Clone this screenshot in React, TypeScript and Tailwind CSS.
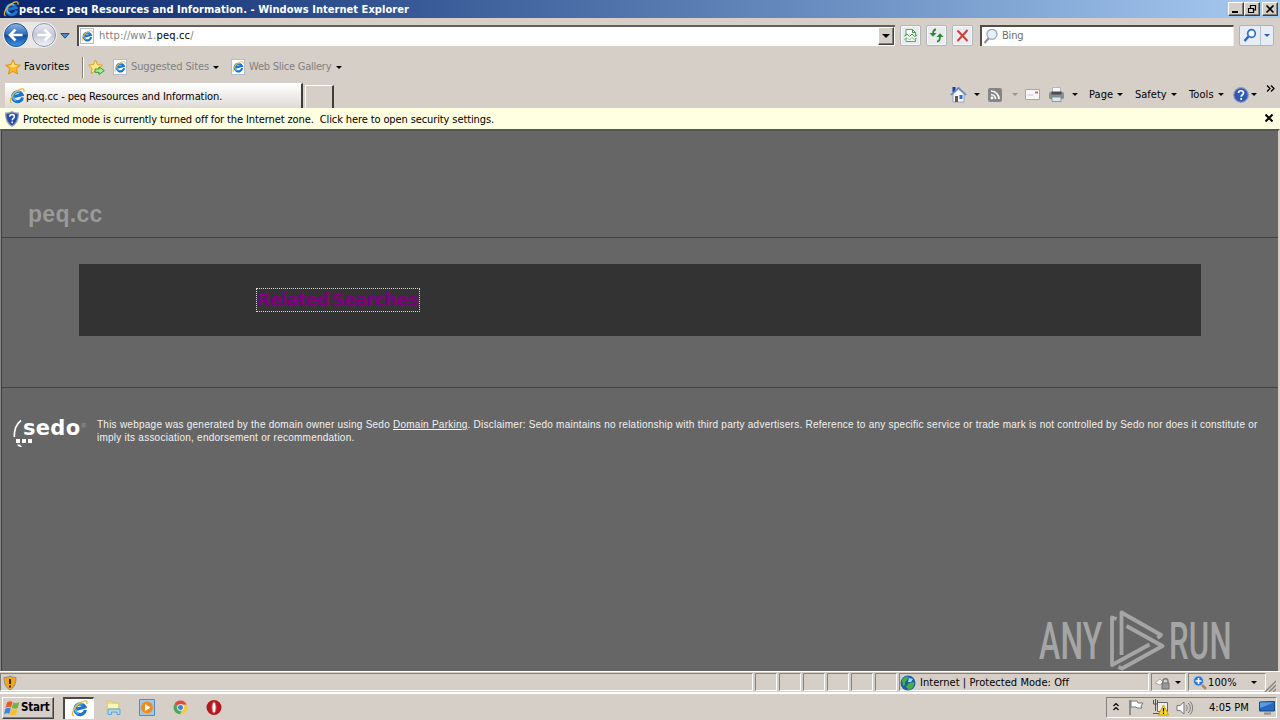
import type { ReactNode } from 'react';

function IeIcon({ size = 15 }: { size?: number }) {
  return (
    <svg width={size} height={size} viewBox="0 0 16 16" fill="none" className="shrink-0">
      <g transform="rotate(-14 8 8)">
        <path d="M13 10.800A5 5 0 1 1 13.300 7.900H5.200" stroke="#1d74cc" strokeWidth="3" />
        <path d="M12 4.600A5.200 5.200 0 0 0 3.600 8c0 2 1 3.500 2.500 4.300" stroke="#5bbcf4" strokeWidth="1.500" />
      </g>
      <path d="M2.600 14.800C-.6 14.200 2.800 5.600 9.200 2.200 13 .1 16 .3 14.800 3.700" stroke="#edb72a" strokeWidth="1.200" />
    </svg>
  );
}

function PageIcon() {
  return (
    <div className="flex h-[16px] w-[14px] shrink-0 items-center border border-[#b4bdc9] bg-white">
      <IeIcon size={12} />
    </div>
  );
}

function Arrow({ color = 'text-black' }: { color?: string }) {
  return (
    <svg width="6" height="3" viewBox="0 0 6 3" className={`shrink-0 ${color}`}>
      <path d="M0 0h6L3 3z" fill="currentColor" />
    </svg>
  );
}

function Star() {
  return (
    <svg width="16" height="16" viewBox="0 0 16 16" className="shrink-0">
      <path d="M8 .8l2.200 4.800 5.200.6-3.900 3.500 1.100 5.300L8 12.400 3.400 15l1.100-5.300L.6 6.200l5.200-.6z" fill="#fbb829" stroke="#d9870f" strokeWidth=".8" />
      <path d="M8 2.500l1.500 3.800 3.500.4-5 1.800-4.500-1.800 3-.4z" fill="#ffe27c" />
    </svg>
  );
}

function AddStar() {
  return (
    <svg width="17" height="17" viewBox="0 0 17 17" className="-ml-px shrink-0">
      <path d="M7.500 1l2 4.600 5 .5-3.800 3.400 1 5-4.200-2.500-4.500 2.500 1.200-5L.6 6.100l4.900-.5z" fill="#ffe88a" stroke="#e0a21b" />
      <path d="M7 10h4V7.800l5.300 3.800L11 15.500v-2.200H7z" fill="#a5ec94" stroke="#23942a" strokeWidth=".9" />
    </svg>
  );
}

function NavCircle({ forward = false }: { forward?: boolean }) {
  return (
    <svg width="26" height="26" viewBox="0 0 26 26" className="shrink-0">
      <defs>
        <linearGradient id="backFill" x1="0" y1="0" x2="0" y2="1">
          <stop offset="0" stopColor="#8db5e6" />
          <stop offset=".48" stopColor="#2c69b8" />
          <stop offset=".52" stopColor="#104a9e" />
          <stop offset="1" stopColor="#3d9ae8" />
        </linearGradient>
        <linearGradient id="forwardFill" x1="0" y1="0" x2="0" y2="1">
          <stop offset="0" stopColor="#e9ebf2" />
          <stop offset=".5" stopColor="#c3c8d6" />
          <stop offset="1" stopColor="#f3f5fa" />
        </linearGradient>
      </defs>
      <circle cx="13" cy="13" r="12.500" fill="#f4f4f7" />
      <circle cx="13" cy="13" r="11.500" fill={forward ? 'url(#forwardFill)' : 'url(#backFill)'} stroke={forward ? '#8f96a8' : '#294f8c'} />
      <path
        d={forward ? 'M6.500 13h12M13.500 7.500l5.500 5.500-5.500 5.500' : 'M19.500 13h-12M12.500 7.500L7 13l5.500 5.500'}
        stroke="#fff"
        strokeWidth="2.700"
        fill="none"
      />
    </svg>
  );
}

function CaptionButton({ children }: { children: ReactNode }) {
  return (
    <div className="h-[14px] w-4 border border-t-white border-l-white border-r-[#404040] border-b-[#404040] bg-[#d6cfc8] shadow-[inset_-1px_-1px_0_#86807a]">
      <svg width="14" height="12" viewBox="0 0 14 12" fill="none" stroke="#000">
        {children}
      </svg>
    </div>
  );
}

function TitleBar() {
  return (
    <header className="flex h-[18px] items-center bg-linear-to-r from-[#0b256b] to-[#a7cbf1] pr-0.5 pl-[3px]">
      <IeIcon size={16} />
      <span className="w-[500px] text-[11px] leading-[17px] font-bold tracking-[0.045px] text-white">
        peq.cc - peq Resources and Information. - Windows Internet Explorer
      </span>
      <div className="ml-auto flex">
        <CaptionButton>
          <path d="M3 9h6" strokeWidth="2" />
        </CaptionButton>
        <CaptionButton>
          <path d="M5.500 5V2.500h5v4.500H9M5 2.500h6M3.500 5.500h5v4h-5zM3 5.500h6" strokeWidth="1.200" />
        </CaptionButton>
        <div className="w-0.5" />
        <CaptionButton>
          <path d="M3.500 2.500l7 7M10.500 2.500l-7 7" strokeWidth="1.700" />
        </CaptionButton>
      </div>
    </header>
  );
}

function ToolButton({ children }: { children: ReactNode }) {
  return (
    <div className="mr-[5px] flex h-[21px] w-[21px] items-center justify-center rounded-[2px] border border-[#b2b5ba] bg-[#e9ebef] shadow-[inset_0_0_0_1px_#f8f9fb]">
      <svg width="17" height="17" viewBox="0 0 17 17" fill="none">
        {children}
      </svg>
    </div>
  );
}

function AddressBar() {
  return (
    <div className="flex h-[34px] items-center pl-[3px]">
      <div className="flex gap-0.5 rounded-full bg-[#e8e6e7]">
        <NavCircle />
        <NavCircle forward />
      </div>
      <svg width="10" height="6" viewBox="0 0 10 6" className="mt-0.5 ml-[3px] shrink-0">
        <path d="M.8.5h8.400L5 5.200z" fill="#4a8bc8" stroke="#24507f" />
      </svg>
      <div className="ml-[7px] flex h-[21px] w-[818px] items-center border-t-2 border-l-2 border-[#504d4a] border-t-[#625f5c] bg-white">
        <div className="ml-px">
          <PageIcon />
        </div>
        <span className="ml-[5px] text-[11px] leading-[18px] tracking-[0.15px] text-[#808080]">
          http://ww1.<span className="text-black">peq.cc</span>/
        </span>
        <div className="mr-px ml-auto flex h-[18px] w-4 items-center justify-center border border-t-white border-l-white border-r-[#404040] border-b-[#404040] bg-[#d6cfc8] shadow-[inset_-1px_-1px_0_#86807a]">
          <svg width="8" height="4" viewBox="0 0 8 4">
            <path d="M0 0h8L4 4z" fill="#000" />
          </svg>
        </div>
      </div>
      <div className="ml-[5px] flex">
        <ToolButton>
          <path d="M4 2.500h6.500l3 3v9H4z" fill="#f4fbf4" stroke="#58a55d" />
          <path d="M10.500 2.500v3h3" stroke="#45964a" />
          <path d="M2 9.500l3-2.500 2.500 2.500L10 7l2.500 2.500L15 8" stroke="#45964a" />
          <path d="M2 11l3-2 2.500 2.500L10 9l2.500 2 2.500-1.500" stroke="#fff" strokeWidth="1.300" />
          <path d="M2 12.500l3-2 2.500 2.500 2.500-2.500 2.500 2.500 2.500-2" stroke="#7fc283" />
        </ToolButton>
        <ToolButton>
          <path d="M8 2.500C6 2.500 5 4 5 7.500M9 14.500c2 0 3-1.500 3-5" stroke="#2c8a33" strokeWidth="1.800" />
          <path d="M1.500 6h7L5 9.700zM8.500 10h7L12 6.300z" fill="#2c8a33" />
        </ToolButton>
        <ToolButton>
          <path d="M3.500 3.500l10 10.500M13.500 3L3.500 14" stroke="#c9403f" strokeWidth="2" />
        </ToolButton>
      </div>
      <div className="ml-0.5 flex h-[21px] w-[254px] items-center border-t-2 border-r border-l-2 border-[#504d4a] border-r-[#efebe6] bg-white pl-px">
        <svg width="17" height="17" viewBox="0 0 17 17" fill="none">
          <path d="M6 10L1.500 15" stroke="#8b8e94" strokeWidth="2" />
          <circle cx="9" cy="6.300" r="5" fill="#e4eff8" stroke="#93a3b5" strokeWidth="1.200" />
        </svg>
        <span className="mt-px ml-0.5 text-[11px] tracking-[-0.2px] text-[#6d6d6d]">Bing</span>
      </div>
      <div className="ml-[5px] flex h-[21px] w-[35px] items-center rounded-[2px] border border-[#a9b3c4] bg-[#e6edf7]">
        <svg width="20" height="17" viewBox="0 0 20 17" fill="none">
          <path d="M8.500 9.500L4.500 14" stroke="#2a62c0" strokeWidth="2.400" />
          <circle cx="11.500" cy="6.500" r="3.800" fill="#fff" stroke="#2f6bd0" strokeWidth="1.700" />
        </svg>
        <div className="mr-[3px] h-full border-l border-[#b5c0d0]" />
        <Arrow color="text-[#2a62b8]" />
      </div>
    </div>
  );
}

function FavoritesBar() {
  return (
    <div className="flex h-[30px] items-center pl-[5px] text-[11px] text-[#808080]">
      <Star />
      <span className="ml-[3px] w-[58px] tracking-[0.1px] text-black">Favorites</span>
      <div className="mr-[5px] h-[21px] w-0.5 border-l border-[#868079] bg-white" />
      <AddStar />
      <div className="ml-2 flex w-[118px] items-center">
        <PageIcon />
        <span className="ml-1 w-[82px] pt-px tracking-[-0.13px]">Suggested Sites</span>
        <Arrow />
      </div>
      <div className="flex items-center">
        <PageIcon />
        <span className="ml-1 w-[87px] pt-px tracking-[-0.24px]">Web Slice Gallery</span>
        <Arrow />
      </div>
    </div>
  );
}

function HomeIcon() {
  return (
    <svg width="17" height="17" viewBox="0 0 17 17" className="shrink-0">
      <path d="M3 8v8h11V8L8.500 3z" fill="#f5f8fd" stroke="#8aa3cf" />
      <path d="M2.500 1h3v5h-3z" fill="#20389a" />
      <path d="M.8 9L8.500 1.800 16.200 9" fill="none" stroke="#6487c8" strokeWidth="1.600" />
      <path d="M5 10h3v6H5z" fill="#7a522c" />
      <path d="M9.500 9h3v4h-3z" fill="#2f6cbd" />
    </svg>
  );
}

function PrinterIcon() {
  return (
    <svg width="17" height="17" viewBox="0 0 17 17" className="shrink-0">
      <path d="M4.500 1.500h8V7h-8z" fill="#f7f7f7" stroke="#b5b5b5" />
      <rect x="1" y="6" width="15" height="7" rx="1.500" fill="#8c8e92" />
      <path d="M3.500 5.500h10v3h-10z" fill="#4b4d51" />
      <path d="M4 11h9v4.500H4z" fill="#d6e9ec" stroke="#7f8589" strokeWidth=".8" />
    </svg>
  );
}

function CommandBar() {
  return (
    <div className="flex h-[26px] pl-[5px] text-[11px]">
      <div className="mt-px flex h-[25px] w-[298px] items-center border-t border-r-2 border-white border-r-[#3f3c39] bg-linear-to-b from-white to-[#dedad6] pl-1">
        <IeIcon size={16} />
        <span className="ml-px pt-0.5 tracking-[-0.1px]">peq.cc - peq Resources and Information.</span>
      </div>
      <div className="mt-[3px] ml-0.5 h-[23px] w-[29px] border-t border-r-2 border-l border-white border-r-[#3f3c39]" />
      <div className="ml-auto flex h-[25px] w-[330px] items-center">
        <div className="flex w-[38px] items-center gap-[7px]">
          <HomeIcon />
          <Arrow />
        </div>
        <div className="flex w-[37px] items-center gap-[10px]">
          <svg width="14" height="14" viewBox="0 0 14 14" fill="none" stroke="#fff" strokeWidth="1.700">
            <rect width="14" height="14" rx="2" fill="#858585" stroke="none" />
            <path d="M3 6.500a4.500 4.500 0 0 1 4.500 4.500M3 3a8 8 0 0 1 8 8" />
            <circle cx="4" cy="10" r=".6" />
          </svg>
          <Arrow color="text-[#9b958f]" />
        </div>
        <svg width="15" height="11" viewBox="0 0 15 11" className="mr-[8px]">
          <path d="M.5.500h14v10H.5z" fill="#f8f6f7" stroke="#aaa5a5" />
          <path d="M10 2.500h3v2h-3z" fill="#d1686b" />
          <path d="M2.500 6h6" stroke="#c9c7d2" />
        </svg>
        <div className="flex w-[41px] items-center gap-[7px]">
          <PrinterIcon />
          <Arrow />
        </div>
        <div className="flex w-[46px] items-center">
          <span className="w-7 pt-px tracking-[0.1px]">Page</span>
          <Arrow />
        </div>
        <div className="flex w-[54px] items-center">
          <span className="w-9 pt-px">Safety</span>
          <Arrow />
        </div>
        <div className="flex w-[44px] items-center">
          <span className="w-[29px] pt-px tracking-[0.1px]">Tools</span>
          <Arrow />
        </div>
        <div className="flex w-[33px] items-center gap-0.5">
          <svg width="16" height="16" viewBox="0 0 16 16">
            <circle cx="8" cy="8" r="7.300" fill="#3158b5" stroke="#8d9cc0" strokeWidth="1.200" />
            <path d="M5.500 6c0-3 5-3 5 0 0 1.700-2.300 1.800-2.300 3.700M8.200 11v2" fill="none" stroke="#fff" strokeWidth="1.700" />
          </svg>
          <Arrow />
        </div>
        <svg width="9" height="7" viewBox="0 0 9 7" fill="none" stroke="#000" strokeWidth="1.300" className="mb-[13px]">
          <path d="M1 .5l3 3-3 3M5 .5l3 3-3 3" />
        </svg>
      </div>
    </div>
  );
}

function InfoBar() {
  return (
    <div className="flex h-[21px] items-center bg-[#ffffe1] pr-[7px] pl-[5px] text-[11px]">
      <svg width="14" height="16" viewBox="0 0 14 16">
        <path d="M7 .7c2 1.300 4 1.500 6.300 1.500C13.500 8 12 12.500 7 15.300 2 12.500.5 8 .7 2.200 3 2.200 5 2 7 .7z" fill="#2950a8" stroke="#96a1b8" strokeWidth="1.300" />
        <path d="M4.700 5.800c0-3 4.700-3 4.700 0 0 1.500-2.200 1.700-2.200 3.400M7.200 10.500v1.700" fill="none" stroke="#fff" strokeWidth="1.500" />
      </svg>
      <span className="ml-1 pt-[3px] tracking-[-0.11px] whitespace-pre">
        Protected mode is currently turned off for the Internet zone.  Click here to open security settings.
      </span>
      <svg width="8" height="8" viewBox="0 0 8 8" className="mb-px ml-auto">
        <path d="M.5.5l7 7M7.500.5l-7 7" stroke="#000" strokeWidth="2" />
      </svg>
    </div>
  );
}

function SedoLogo() {
  return (
    <div className="flex h-8 w-[84px] shrink-0">
      <svg width="9" height="32" viewBox="0 0 9 32" fill="none" className="overflow-visible">
        <path d="M8 3.500C3.500 7 1 12 1.300 20" stroke="#fff" strokeWidth="1.600" />
        <path d="M3 22h4v4H3zM9 22h4v4H9zM15 22h4v4h-4zM4 27.500h3l2 2.500c-2.500 0-4-.5-5-2.500z" fill="#fff" />
      </svg>
      <span className="ml-px font-['DejaVu_Sans',sans-serif] text-[21px] leading-[22px] font-bold tracking-[0.3px] text-white">sedo</span>
      <span className="mt-1 text-[7px] leading-[10px] text-[#999]">®</span>
    </div>
  );
}

function AnyRunWatermark() {
  return (
    <div className="absolute right-[45px] bottom-0 flex h-[62px] w-[194px] items-center text-[#a5a5a5]">
      <span className="mt-[3px] w-[70px] origin-left scale-x-[0.625] font-[Roboto,sans-serif] text-[51px] leading-[60px] font-medium tracking-[0.4px]">ANY</span>
      <svg width="56" height="62" viewBox="0 0 56 62" fill="none" stroke="currentColor" strokeWidth="3.800" strokeLinejoin="round" className="shrink-0">
        <path d="M7.500 10L3 8.500V56L40.500 35.500M12.500 46V3.500L52 26l-3.500 3M17.500 17L53.500 37 13 59.500 9.500 58" />
      </svg>
      <span className="mt-[3px] ml-[4px] w-[64px] origin-left scale-x-[0.61] font-[Roboto,sans-serif] text-[51px] leading-[60px] font-medium tracking-[0.4px]">RUN</span>
    </div>
  );
}

function WebPage() {
  return (
    <main className="relative h-[542px] overflow-hidden border-t-2 border-r-2 border-l border-[#868686] border-t-[#555] border-r-[#d6cfc8] bg-[#666] pl-px shadow-[inset_1px_0_0_#404040]">
      <div className="flex h-[107px] items-end border-b border-[#424242] pb-2 pl-[26px]">
        <h1 className="font-['Liberation_Sans',Arial,sans-serif] text-[23px] leading-[30px] font-bold tracking-[0.3px] text-[#999]">peq.cc</h1>
      </div>
      <div className="mx-[77px] mt-[26px] flex h-[72px] items-start bg-[#333] pt-6 pl-[177px]">
        <a className="flex h-6 w-[164px] items-center border border-dotted border-[#d9dfc9] font-['DejaVu_Sans',Verdana,sans-serif] text-[18px] leading-[22px] font-bold tracking-[-0.85px] [word-spacing:-2.5px] whitespace-nowrap text-[#800080] underline">
          Related Searches
        </a>
      </div>
      <footer className="mt-[51px] flex border-t border-[#424242] pt-[29px] pl-[11px]">
        <SedoLogo />
        <p className="mt-px font-['Liberation_Sans',Arial,sans-serif] text-[10px] leading-[13px] tracking-[0.244px] whitespace-nowrap text-[#f2f2f2]">
          This webpage was generated by the domain owner using Sedo <a className="underline">Domain Parking</a>. Disclaimer: Sedo maintains no
          relationship with third party advertisers. Reference to any specific service or trade mark is not controlled by Sedo nor does it constitute or
          <br />
          imply its association, endorsement or recommendation.
        </p>
      </footer>
      <AnyRunWatermark />
    </main>
  );
}

function StatusCell({ width, children }: { width: string; children?: ReactNode }) {
  return (
    <div className={`flex h-[18px] shrink-0 items-center border border-t-[#868079] border-l-[#868079] border-r-white border-b-white ${width}`}>
      {children}
    </div>
  );
}

function StatusBar() {
  return (
    <div className="flex h-[23px] items-center gap-0.5 border-t border-b-2 border-white text-[11px]">
      <StatusCell width="w-[753px]">
        <svg width="16" height="16" viewBox="0 0 16 16" className="mt-0.5 ml-px">
          <path d="M8 1c2 1 4 1.500 6 1.500 0 6-1.500 9.500-6 12.500C3.500 12 2 8.500 2 2.500 4 2.500 6 2 8 1z" fill="#f3a51c" stroke="#8e8c88" />
          <path d="M8 4v5M8 10.500v2" stroke="#3c2603" strokeWidth="2" />
        </svg>
      </StatusCell>
      <StatusCell width="w-[22px]" />
      <StatusCell width="w-[22px]" />
      <StatusCell width="w-[22px]" />
      <StatusCell width="w-[22px]" />
      <StatusCell width="w-[22px]" />
      <StatusCell width="w-[22px]" />
      <StatusCell width="w-[250px]">
        <svg width="16" height="16" viewBox="0 0 16 16" className="mt-0.5">
          <circle cx="8" cy="8" r="7.500" fill="#1e5da7" />
          <path d="M2 5c2-4 6-4 7-3L7 5 5 7v3l-2 1zM9 8l5-1c1 4-2 7-5 8l-3-3z" fill="#46ad49" />
          <path d="M9 3l4 1-2 3-3 0z" fill="#9fdcf6" />
        </svg>
        <span className="ml-1 pt-[3px] tracking-[0.05px]">Internet | Protected Mode: Off</span>
      </StatusCell>
      <StatusCell width="w-[35px]">
        <svg width="19" height="16" viewBox="0 0 19 16" fill="none" className="mt-0.5 mr-0.5 ml-0.5">
          <path d="M1 8l5-4 3 3-3 3z" fill="#f7f7f7" stroke="#aaa" />
          <path d="M9 8V6c0-3 5-3 5 0v2" stroke="#777" strokeWidth="1.300" />
          <path d="M8 8h7v6H8z" fill="#999" stroke="#707070" />
        </svg>
        <Arrow />
      </StatusCell>
      <StatusCell width="w-[78px]">
        <svg width="17" height="16" viewBox="0 0 17 16" fill="none" className="mt-px ml-[3px]">
          <path d="M10 10l4 4" stroke="#b1884f" strokeWidth="2.500" />
          <circle cx="6.500" cy="6" r="5" fill="#2874ce" stroke="#a8c8ed" />
          <path d="M3.500 6h6M6.500 3v6" stroke="#fff" strokeWidth="1.700" />
        </svg>
        <span className="-ml-px w-[43px] pt-[3px] tracking-[0.1px]">100%</span>
        <Arrow />
      </StatusCell>
      <svg width="12" height="12" viewBox="0 0 12 12" className="mt-2 -ml-1 shrink-0">
        <path d="M1 12L12 1M5 12l7-7M9 12l3-3" stroke="#868079" strokeWidth="1.300" />
      </svg>
    </div>
  );
}

function WindowsFlag() {
  return (
    <svg width="17" height="16" viewBox="0 0 17 16">
      <path d="M3 2.500C5 1 7 1 8.500 2L7 7.500C5.500 6.500 3.500 6.500 1.500 8z" fill="#ea5826" />
      <path d="M9.300 2.500c2 1 4 .8 6-.5L13.700 8c-2 1-4 1-6-.3z" fill="#71b33c" />
      <path d="M1.300 9c2-1.500 4-1.500 5.500-.5L5.300 14c-1.500-1-3.500-1-5.300.5z" fill="#3889d8" />
      <path d="M7.500 8.800c2 1.200 4 1 6 0L12 14.500c-2 1.300-4 1-6 0z" fill="#f5bf29" />
    </svg>
  );
}

function ExplorerIcon() {
  return (
    <svg width="17" height="17" viewBox="0 0 17 17">
      <path d="M2 2h5l1 2h6v9H2z" fill="#eedb86" stroke="#d9c67c" />
      <path d="M3 5h10v4H3z" fill="#fff4b8" />
      <path d="M3 15.500V10h12v5.500h-3V13H6.500v2.500z" fill="#a5d8ef" stroke="#5aa9d8" />
    </svg>
  );
}

function Taskbar() {
  return (
    <div className="flex h-[26px] items-center pt-px pl-0.5">
      <div className="flex h-[22px] w-[52px] items-center border border-t-white border-l-white border-r-[#404040] border-b-[#404040] pl-px shadow-[inset_-1px_-1px_0_#86807a]">
        <WindowsFlag />
        <span className="text-[11.500px] font-bold tracking-[-0.2px]">Start</span>
      </div>
      <div className="ml-[9px] flex h-[22px] w-[31px] items-center justify-center border-t-2 border-r border-l-2 border-[#4b4845] border-r-white bg-white">
        <IeIcon size={17} />
      </div>
      <div className="ml-[11px] flex items-center gap-[17px]">
        <ExplorerIcon />
        <svg width="16" height="17" viewBox="0 0 16 17">
          <path d="M.5.500h15v16H.5z" fill="#9fc8e9" stroke="#528bc1" />
          <circle cx="8" cy="8.500" r="6" fill="#f18a1d" />
          <path d="M6 5l5.500 3.500L6 12z" fill="#fff" />
        </svg>
        <svg width="15" height="15" viewBox="0 0 16 16" className="ml-px">
          <path d="M8 8L1.500 4.500A7.300 7.300 0 0 1 14.700 5H8z" fill="#df4a3c" />
          <path d="M8 8l-6.500-3.500a7.300 7.300 0 0 0 6 10.800L10.500 9z" fill="#4aa957" />
          <path d="M8 5h6.700A7.300 7.300 0 0 1 7.500 15.300L11 9z" fill="#f5cc3a" />
          <circle cx="8" cy="8" r="3.300" fill="#4382d9" stroke="#fff" />
        </svg>
        <svg width="16" height="17" viewBox="0 0 16 17" className="ml-px">
          <circle cx="8" cy="8.500" r="7.500" fill="#b5171f" />
          <ellipse cx="8" cy="8.500" rx="2" ry="5.500" fill="#fff" stroke="#d95c5f" />
        </svg>
      </div>
      <div className="mr-[3px] ml-auto flex h-[21px] w-[171px] items-center border border-t-[#868079] border-l-[#868079] border-r-white border-b-white pl-1.5 text-[11px]">
        <svg width="6" height="9" viewBox="0 0 6 9" fill="none" stroke="#000" strokeWidth="1.200" className="mb-0.5">
          <path d="M.5 4L3 1.500 5.500 4M.5 8L3 5.500 5.500 8" />
        </svg>
        <svg width="17" height="17" viewBox="0 0 17 17" className="ml-[9px]">
          <path d="M2 1v15" stroke="#777" strokeWidth="1.500" />
          <path d="M3 2h6l1 2h5l-2 3 1 2H9L8 8H3z" fill="#fff" stroke="#777" />
        </svg>
        <svg width="17" height="17" viewBox="0 0 17 17" className="ml-[7px]" fill="none">
          <path d="M5.500 3.500h10v9h-10z" fill="#eee" stroke="#666" />
          <path d="M1.500 1v4h4V1M3.500 0v12M1 14.500h9" stroke="#555" />
          <path d="M11.500 6l5 10h-10z" fill="#ffdc25" stroke="#c99e0d" />
          <path d="M11.500 9v3.500M11.500 13.500v1.500" stroke="#000" strokeWidth="1.200" />
        </svg>
        <svg width="17" height="16" viewBox="0 0 17 16" className="ml-[7px]" fill="none" stroke="#777">
          <path d="M1 5.500h3L8 2v12l-4-3.500H1z" fill="#f6f6f6" />
          <path d="M10 5c1.500 1.500 1.500 4.500 0 6M12 3c3 2.500 3 7.500 0 10M14 1.500c3.500 4 3.500 9 0 13" />
        </svg>
        <span className="ml-4 w-[50px] pt-px">4:05 PM</span>
        <svg width="16" height="14" viewBox="0 0 16 14">
          <path d="M.5 1l15-.5V10H.5z" fill="#2868be" stroke="#174682" />
          <path d="M1 1.500h14L1 7z" fill="#5b9be1" />
          <path d="M5 12.500h7" stroke="#858b94" strokeWidth="2" />
        </svg>
      </div>
    </div>
  );
}

export default function App() {
  return (
    <div className="h-[720px] w-[1280px] overflow-hidden bg-[#d6cfc8] font-['DejaVu_Sans_Condensed','Noto_Sans',Tahoma,sans-serif] whitespace-nowrap text-black">
      <TitleBar />
      <AddressBar />
      <FavoritesBar />
      <CommandBar />
      <InfoBar />
      <WebPage />
      <StatusBar />
      <Taskbar />
    </div>
  );
}
